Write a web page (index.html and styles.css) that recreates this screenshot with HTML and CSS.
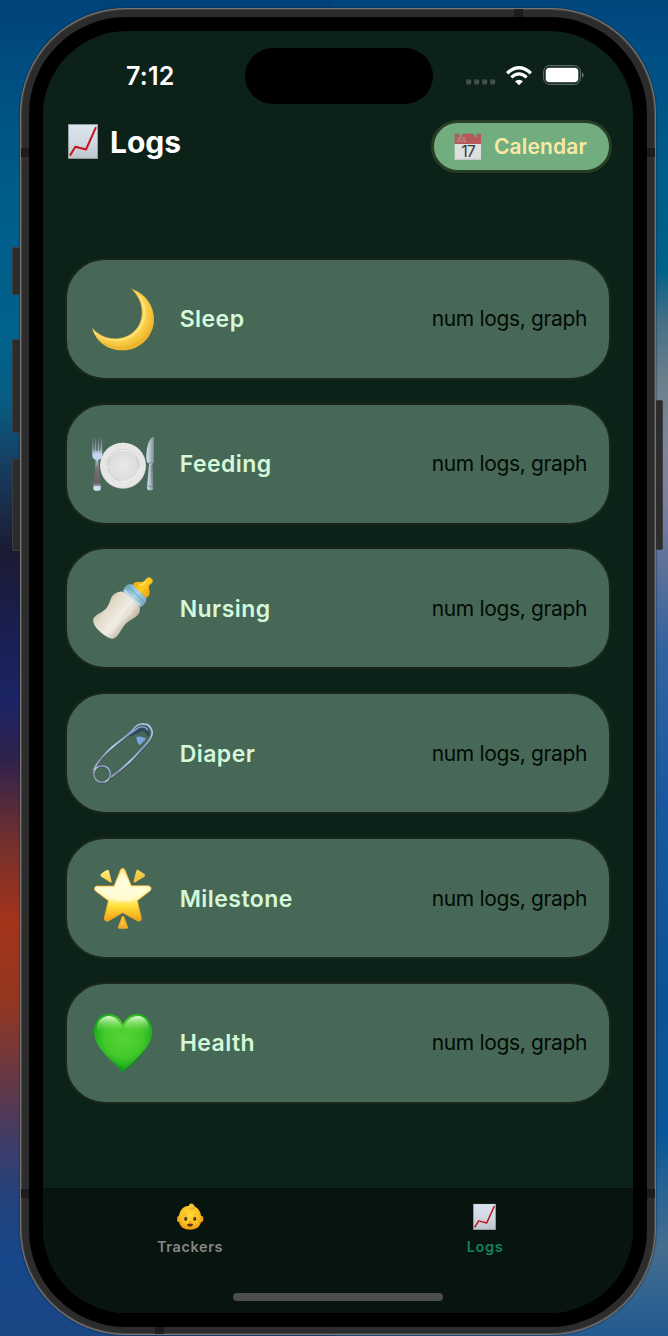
FILE: index.html
```html
<!DOCTYPE html>
<html lang="en">
<head>
<meta charset="utf-8">
<title>Logs</title>
<link rel="stylesheet" href="styles.css">
</head>
<body>
<svg class="defs" width="0" height="0" aria-hidden="true">
  <defs>
    <linearGradient id="paper" x1="0" y1="0" x2="0" y2="1"><stop offset="0" stop-color="#dbe6f1"/><stop offset=".5" stop-color="#d3dce5"/><stop offset="1" stop-color="#bdc4cb"/></linearGradient>
    <symbol id="chart" viewBox="0 0 90 104">
      <rect x="1" y="1" width="88" height="102" fill="url(#paper)" stroke="#9ba6a9" stroke-width="2"/>
      <path d="M14 2V102M27 2V102M40 2V102M53 2V102M66 2V102M79 2V102M2 15H88M2 28H88M2 41H88M2 54H88M2 67H88M2 80H88M2 93H88" stroke="#bfd0df" stroke-width="1" opacity=".5"/>
      <path d="M6 94L22 68L54 76L84 9" fill="none" stroke="#c5151d" stroke-width="6" stroke-linejoin="round"/>
    </symbol>
  </defs>
</svg>
<div class="phone">
  <i class="key key-action"></i><i class="key key-up"></i><i class="key key-down"></i><i class="key key-power"></i>
  <i class="band band-lt"></i><i class="band band-rt"></i><i class="band band-lb"></i><i class="band band-rb"></i><i class="band band-top"></i><i class="band band-bottom"></i>
  <div class="bezel">
    <div class="screen">
      <div class="status">
        <span class="time">7:12</span>
        <span class="island"></span>
        <span class="indicators">
          <svg class="dots" width="30" height="6" viewBox="0 0 30 6" fill="#3e5048"><rect x="0" y=".3" width="5.3" height="5.3" rx="1.8"/><rect x="8" y=".3" width="5.3" height="5.3" rx="1.8"/><rect x="16" y=".3" width="5.3" height="5.3" rx="1.8"/><rect x="24" y=".3" width="5.3" height="5.3" rx="1.8"/></svg>
          <svg class="wifi" width="26" height="20" viewBox="0 0 78 60" fill="none" stroke="#fff"><path d="M3.500 21.500Q39-11 74.500 21.500" stroke-width="10"/><path d="M16 34Q39 13 62 34" stroke-width="9.500"/><path d="M39 58L27 46Q39 36 51 46Z" fill="#fff" stroke="none"/></svg>
          <svg class="battery" width="41" height="20" viewBox="0 0 123 60"><rect x="2" y="2" width="110" height="56" rx="18" fill="none" stroke="#6c7a74" stroke-width="3"/><rect x="8" y="8" width="98" height="44" rx="12" fill="#fff"/><path d="M117 22Q122 25 122 30T117 38Z" fill="#6c7a74"/></svg>
        </span>
      </div>
      <header class="header">
        <h1 class="title"><svg width="30" height="35"><use href="#chart"/></svg><span>Logs</span></h1>
        <div class="calendar">
          <svg width="28" height="28" viewBox="0 0 84 84">
            <path d="M2 2H81V34H2Z" fill="#b5595d"/><path d="M2 33H81V80H2Z" fill="#dedfdf"/><path d="M2 77H81V81H2Z" fill="#c7caca"/>
            <path d="M16 0H24V8Q24 13 20 13T16 8ZM60 0H68V8Q68 13 64 13T60 8Z" fill="#72ad80"/><path d="M13 4L20 10L27 4M57 4L64 10L71 4" stroke="#55916a" stroke-width="3" fill="none"/>
            <text class="cal-month" x="7" y="28">JUL</text><text class="cal-day" x="42" y="73">17</text>
          </svg>
          <span>Calendar</span>
        </div>
      </header>
      <main class="list">
        <section class="card">
          <svg class="emoji" viewBox="92 109 192 192">
            <defs><radialGradient id="moon" gradientUnits="userSpaceOnUse" cx="170" cy="185" r="114"><stop offset=".58" stop-color="#ffe36e"/><stop offset=".75" stop-color="#fbd24e"/><stop offset="1" stop-color="#eeb62a"/></radialGradient></defs>
            <path d="M213 114C257 129 281 166 281 205C281 258 239 299 187 299C142 299 106 273 95 231C113 253 137 264 165 264C211 264 245 230 245 185C245 157 233 134 213 114Z" fill="url(#moon)"/>
            <path d="M104 245C140 275 202 277 234 239C257 210 259 166 236 137" fill="none" stroke="#ffe98a" stroke-width="7" stroke-linecap="round" opacity=".6"/>
            <path d="M95 231C113 253 137 264 165 264C211 264 245 230 245 185C245 157 233 134 213 114" fill="none" stroke="#b98b2b" stroke-width="1.500"/>
            <path d="M129 278Q189 308 239 273T278 197" fill="none" stroke="#e0ac2b" stroke-width="2"/>
          </svg>
          <h2 class="name">Sleep</h2><p class="meta">num logs, graph</p>
        </section>
        <section class="card">
          <svg class="emoji" viewBox="92 109 192 192">
            <defs><linearGradient id="steel" x1="0" y1="0" x2="0" y2="1"><stop offset="0" stop-color="#60666e"/><stop offset=".38" stop-color="#c7d9f3"/><stop offset=".58" stop-color="#747479"/><stop offset=".85" stop-color="#655f60"/><stop offset="1" stop-color="#d8e8fa"/></linearGradient><linearGradient id="blade" x1="0" y1="0" x2="1" y2="0"><stop offset="0" stop-color="#dce6f1"/><stop offset=".5" stop-color="#aebdca"/><stop offset="1" stop-color="#7d8790"/></linearGradient><radialGradient id="plate"><stop offset="0" stop-color="#e9e9e8"/><stop offset="1" stop-color="#dcdcdb"/></radialGradient></defs>
            <path d="M96 126L98 125L100 165L103 165L104 125H107L108 165L112 165L113 125H116L117 165L120 165L122 125H125L126 178Q126 190 114 193L121 274Q122 285 112 285H105Q98 284 99 274L106 193Q96 190 96 178Z" fill="url(#steel)"/><path d="M97 172H125V181Q124 190 114 191H107Q98 189 97 181Z" fill="#c2d4f0"/><path d="M100 271H121V281Q120 285 111 285T100 281Z" fill="#cbdcf2"/>
            <path d="M279 123Q259 134 258 184Q258 203 266 203L260 276Q260 284 269 284Q279 284 279 278L276 203H281V126Z" fill="url(#blade)"/><path d="M266 201H275M261 270L278 275M273 209L276 277" stroke="#717c86" stroke-width="2"/>
            <circle cx="188" cy="210" r="69" fill="#cacac9"/><circle cx="188" cy="209" r="68" fill="#e6e6e5"/><circle cx="188" cy="209" r="49" fill="#cfd0d1"/><circle cx="188" cy="212" r="45" fill="url(#plate)"/><path d="M140 211A48 48 0 0 0 235 220M149 184A48 48 0 0 1 227 184" fill="none" stroke="#f6f6f5" stroke-width="3"/><path d="M141 217Q147 249 181 257" fill="none" stroke="#b9c8da" stroke-width="2"/>
          </svg>
          <h2 class="name">Feeding</h2><p class="meta">num logs, graph</p>
        </section>
        <section class="card">
          <svg class="emoji" viewBox="92 109 192 192">
            <defs><linearGradient id="milk" gradientUnits="userSpaceOnUse" x1="128" y1="185" x2="208" y2="250"><stop offset="0" stop-color="#c9bca7"/><stop offset=".25" stop-color="#e3dac9"/><stop offset=".65" stop-color="#f0ede4"/><stop offset="1" stop-color="#c7bbaa"/></linearGradient><linearGradient id="teat" x1="0" y1="0" x2="1" y2="1"><stop offset="0" stop-color="#e89b08"/><stop offset=".5" stop-color="#ffcb20"/><stop offset="1" stop-color="#e38c06"/></linearGradient><linearGradient id="ring" x1="0" y1="0" x2="1" y2="1"><stop offset="0" stop-color="#629db8"/><stop offset=".5" stop-color="#a8d3e3"/><stop offset="1" stop-color="#699cae"/></linearGradient></defs>
            <path d="M217 138Q219 126 232 126C247 129 253 126 256 119Q262 110 270 114Q282 121 275 130L267 137C262 145 270 153 268 161Q267 171 256 175Z" fill="url(#teat)"/><path d="M256 124Q252 133 238 137" fill="none" stroke="#ffe36b" stroke-width="5" stroke-linecap="round"/>
            <path d="M187 156C190 143 201 132 214 133L258 175Q260 193 238 204Z" fill="url(#ring)"/><path d="M192 151L239 196" stroke="#c5e2eb" stroke-width="5"/><path d="M202 140L249 184" stroke="#4c8faf" stroke-width="2"/>
            <path d="M162 163Q179 149 196 160L232 193Q243 206 237 219C229 235 206 239 191 258C177 277 171 297 155 297Q139 295 117 274Q94 252 99 237C107 221 131 218 141 201C153 183 149 172 162 163Z" fill="url(#milk)"/><path d="M154 278C161 258 177 244 197 230Q212 218 218 205" fill="none" stroke="#fffef7" stroke-width="10" opacity=".25" stroke-linecap="round"/>
          </svg>
          <h2 class="name">Nursing</h2><p class="meta">num logs, graph</p>
        </section>
        <section class="card">
          <svg class="emoji" viewBox="92 109 192 192">
            <defs><linearGradient id="pin" x1="0" y1="1" x2="1" y2="0"><stop offset="0" stop-color="#c7c6c4"/><stop offset=".25" stop-color="#8796b4"/><stop offset=".45" stop-color="#c0d2ed"/><stop offset=".7" stop-color="#849fc6"/><stop offset="1" stop-color="#b3cced"/></linearGradient></defs>
            <path d="M205 154L237 130Q254 124 266 137L268 150L263 158L259 148Q251 137 240 141L208 157Z" fill="#33465a"/>
            <path d="M151 280C181 260 218 225 244 195C263 174 279 158 275 141Q269 121 251 119C236 116 225 126 216 137C195 161 164 177 137 206C115 229 98 250 100 268" fill="none" stroke="#42475b" stroke-width="7"/>
            <path d="M151 278C181 257 218 223 244 193C263 172 279 156 275 139Q269 119 251 118C236 115 225 125 216 137C195 160 164 176 137 205C115 228 98 249 100 266" fill="none" stroke="url(#pin)" stroke-width="5.500"/>
            <circle cx="125" cy="269" r="25" fill="none" stroke="#3f4554" stroke-width="6"/><circle cx="125" cy="268" r="25" fill="none" stroke="url(#pin)" stroke-width="4.500"/>
            <path d="M228 157Q239 153 258 162L238 182Q230 176 228 157Z" fill="#79a6dc"/><path d="M200 153L235 129Q254 122 262 137" fill="none" stroke="#85a7d3" stroke-width="4"/>
          </svg>
          <h2 class="name">Diaper</h2><p class="meta">num logs, graph</p>
        </section>
        <section class="card">
          <svg class="emoji" viewBox="92 109 192 192">
            <defs><linearGradient id="star" gradientUnits="userSpaceOnUse" x1="0" y1="116" x2="0" y2="276"><stop offset="0" stop-color="#ffe58a"/><stop offset=".25" stop-color="#fffbd6"/><stop offset=".55" stop-color="#fff9bd"/><stop offset=".7" stop-color="#ffe13a"/><stop offset="1" stop-color="#f29a15"/></linearGradient><linearGradient id="ray" x1="0" y1="0" x2="1" y2="1"><stop offset="0" stop-color="#fff07b"/><stop offset="1" stop-color="#efb62b"/></linearGradient></defs>
            <path d="M181 119Q187 113 193 119L213 168H265Q277 173 270 183L231 213L243 266Q242 278 231 273L187 249L144 274Q131 276 132 265L144 213L105 184Q98 173 109 169H161Z" fill="url(#star)" stroke="#efaa24" stroke-width="2.500"/>
            <path d="M187 127L205 174L257 177L222 207Q188 224 152 207L117 177L170 174Z" fill="#fffff0" opacity=".45"/>
            <path d="M120 135Q129 124 142 120Q145 120 146 124L154 155Q154 160 149 158L121 140ZM228 123Q230 119 234 121L253 134Q256 138 252 141L225 158Q219 160 220 154Z" fill="url(#ray)"/><path d="M184 261Q188 255 192 261L203 292Q204 297 199 297H177Q172 297 173 292Z" fill="#f0ab28"/><path d="M187 261L180 287H194Z" fill="#ffdc4f" opacity=".6"/>
          </svg>
          <h2 class="name">Milestone</h2><p class="meta">num logs, graph</p>
        </section>
        <section class="card">
          <svg class="emoji" viewBox="92 109 192 192">
            <defs><radialGradient id="heart" gradientUnits="userSpaceOnUse" cx="190" cy="190" r="98"><stop offset="0" stop-color="#57d635"/><stop offset=".6" stop-color="#42c92a"/><stop offset="1" stop-color="#13a51b"/></radialGradient><linearGradient id="shine" x1="0" y1="0" x2="0" y2="1"><stop offset="0" stop-color="#e9ffdc" stop-opacity=".95"/><stop offset="1" stop-color="#75dd4c" stop-opacity="0"/></linearGradient></defs>
            <path d="M188 293C171 271 136 248 115 215C91 181 97 122 142 117C165 116 181 132 188 149C195 132 211 116 234 117C279 122 286 181 261 215C240 248 205 271 188 293Z" fill="url(#heart)"/>
            <path d="M143 124C162 123 178 138 187 160C169 171 137 179 109 167C108 143 121 127 143 124ZM233 124C254 125 267 143 268 167C241 178 208 173 189 160C198 138 213 124 233 124Z" fill="url(#shine)"/>
            <path d="M188 292L121 220Q156 258 188 279T255 221Z" fill="#118e16" opacity=".36"/>
          </svg>
          <h2 class="name">Health</h2><p class="meta">num logs, graph</p>
        </section>
      </main>
      <footer class="tabbar">
        <nav class="tabs">
          <a class="tab">
            <svg width="28" height="28" viewBox="528 202 84 84">
              <defs><radialGradient id="face" cx=".5" cy=".4" r=".6"><stop offset="0" stop-color="#ffda38"/><stop offset=".65" stop-color="#fec222"/><stop offset="1" stop-color="#e99a10"/></radialGradient></defs>
              <ellipse cx="538" cy="250" rx="7" ry="10" fill="#eda018"/><ellipse cx="603" cy="250" rx="7" ry="10" fill="#eda018"/><path d="M570 210C594 210 604 229 604 249C604 272 590 282 570 282S536 272 536 249C536 229 546 210 570 210Z" fill="url(#face)"/>
              <path d="M567 208Q570 202 578 205Q588 211 580 220Q576 224 570 218" fill="#f6c84a" stroke="#c98a1a" stroke-width="2"/><ellipse cx="557" cy="249" rx="5" ry="6" fill="#493315"/><ellipse cx="584" cy="249" rx="5" ry="6" fill="#493315"/><circle cx="555" cy="247" r="1.500" fill="#fff"/><circle cx="582" cy="247" r="1.500" fill="#fff"/><path d="M549 238Q555 233 561 237M580 237Q586 233 592 238" stroke="#dda026" stroke-width="2" fill="none"/><path d="M561 265Q570 262 580 265Q578 273 570 273T561 265Z" fill="#603316"/><path d="M567 258H574" stroke="#d68b11" stroke-width="3"/>
            </svg>
            <span>Trackers</span>
          </a>
          <a class="tab active">
            <svg width="24" height="28" viewBox="0 -2 72 84"><use href="#chart" y="0" width="69" height="79"/></svg>
            <span>Logs</span>
          </a>
        </nav>
        <div class="home"></div>
      </footer>
    </div>
  </div>
</div>
</body>
</html>
```
FILE: styles.css
```css
* { box-sizing: border-box; }
html, body { margin: 0; width: 668px; height: 1336px; overflow: hidden; }
body {
  padding: 8px 12px 0 20px;
  font-family: Inter, "Liberation Sans", sans-serif;
  background:
    linear-gradient(180deg, #00467d 0, #004f85 60px, #005c8b 170px, #006189 270px, #456f86 320px, #6c7f8b 380px, #7d869a 450px, #7a80a0 500px, #5b7099 570px, #3263a0 650px, #1858a0 800px, #0b5295 1000px, #08579a 1136px, #286393 1190px, #466d8e 1250px, #306291 1300px, #245a91 1336px) right / 334px 100% no-repeat,
    linear-gradient(180deg, #00427a 0, #004b80 50px, #005d8c 200px, #00638c 340px, #085c83 400px, #173b5e 470px, #1c1b33 550px, #191f50 630px, #1b2464 700px, #30224d 760px, #71302e 840px, #a4331b 920px, #943720 1000px, #60384a 1090px, #3f3c67 1140px, #22437d 1200px, #17478a 1260px, #1a4685 1336px) left / 334px 100% no-repeat;
}
.defs { display: block; position: absolute; }
.phone {
  position: relative;
  width: 636px;
  height: 1327px;
  padding: 9px;
  border-radius: 106px;
  background: #2c2c2c;
  box-shadow: inset 0 0 0 1px #777673, inset 0 0 0 2px #484848, 0 0 2px #001a2c;
}
.bezel { height: 1310px; padding: 14px; border-radius: 97px; background: #000; }
.screen { display: flex; flex-direction: column; height: 1282px; border-radius: 84px; overflow: hidden; background: #0c2219; }

.key { position: absolute; left: -8px; width: 8px; background: #2c2c2c; border: 1px solid #3b3d3e; border-right: 0; border-radius: 2px 0 0 2px; }
.key-action { top: 239px; height: 48px; }
.key-up { top: 331px; height: 94px; }
.key-down { top: 450px; height: 93px; }
.key-power { top: 392px; left: 636px; height: 150px; width: 7px; border: 1px solid #3b3d3e; border-left: 0; border-radius: 0 2px 2px 0; }
.band { position: absolute; width: 8px; height: 9px; background: #1d1d1d; }
.band-lt { left: 1px; top: 140px; }
.band-rt { right: 1px; top: 140px; }
.band-lb { left: 1px; top: 1181px; }
.band-rb { right: 1px; top: 1181px; }
.band-top { left: 494px; top: 1px; width: 9px; height: 8px; }
.band-bottom { left: 135px; bottom: 1px; width: 9px; height: 7px; }

.status { display: flex; height: 89px; padding: 17px 48px 0 83px; align-items: flex-start; color: #fff; }
.time { width: 118.500px; font-size: 25px; line-height: 30px; font-weight: 600; letter-spacing: .2px; padding-top: 13px; }
.island { width: 188px; height: 56px; border-radius: 28px; background: #000; }
.indicators { display: flex; width: 119px; margin: 17px 0 0 auto; align-items: flex-start; }
.dots { margin: 14px 10px 0 0; }
.wifi { margin: .5px 11px 0 0; }
.battery { flex: none; }

.header { display: flex; height: 137.700px; padding: 0 21px 0 25px; align-items: flex-start; justify-content: space-between; }
.title { display: flex; align-items: center; gap: 12px; height: 35px; margin: 4px 0 0; color: #fff; font-size: 30px; line-height: 35px; font-weight: 700; }
.title span { padding-top: 2px; }
.calendar { display: flex; width: 181px; height: 53px; padding: 0 0 0 20px; align-items: center; gap: 12px; border: 3px solid #293d25; border-radius: 27px; background: #72ad80; color: #fbe9a3; font-size: 21px; font-weight: 600; letter-spacing: .15px; }
.cal-month { font: 500 17px Inter, sans-serif; fill: #d79796; }
.cal-day { font: 400 48px Inter, sans-serif; letter-spacing: -3px; fill: #373939; text-anchor: middle; }

.list { display: flex; flex: 1; flex-direction: column; gap: 22.870px; padding: 0 22px; }
.card { display: flex; flex: none; height: 122px; padding: 0 22px 0 23.670px; align-items: center; border: 2px solid #19281b; border-radius: 40px; background: #476856; }
.emoji { flex: none; width: 64px; height: 64px; overflow: visible; }
.name { flex: 1; margin: 0 0 0 25px; padding-top: 1px; color: #d4f8d9; font-size: 23px; line-height: 30px; font-weight: 600; letter-spacing: .45px; }
.meta { margin: 0; padding-top: 1px; color: #020a06; font-size: 21px; line-height: 28px; letter-spacing: -.35px; white-space: nowrap; }

.tabbar { display: flex; height: 125px; flex-direction: column; align-items: center; justify-content: space-between; padding-bottom: 12px; border-top: 1px solid #06110c; background: #08140e; }
.tabs { display: grid; width: 100%; grid-template-columns: 1fr 1fr; }
.tab { display: flex; flex-direction: column; align-items: center; gap: 7px; padding: 14px 1px 0 0; color: #858886; font-size: 14.500px; line-height: 18px; font-weight: 600; letter-spacing: .6px; }
.active { color: #128161; }
.home { width: 210px; height: 8px; border-radius: 4px; background: #4d4e4e; }
```
